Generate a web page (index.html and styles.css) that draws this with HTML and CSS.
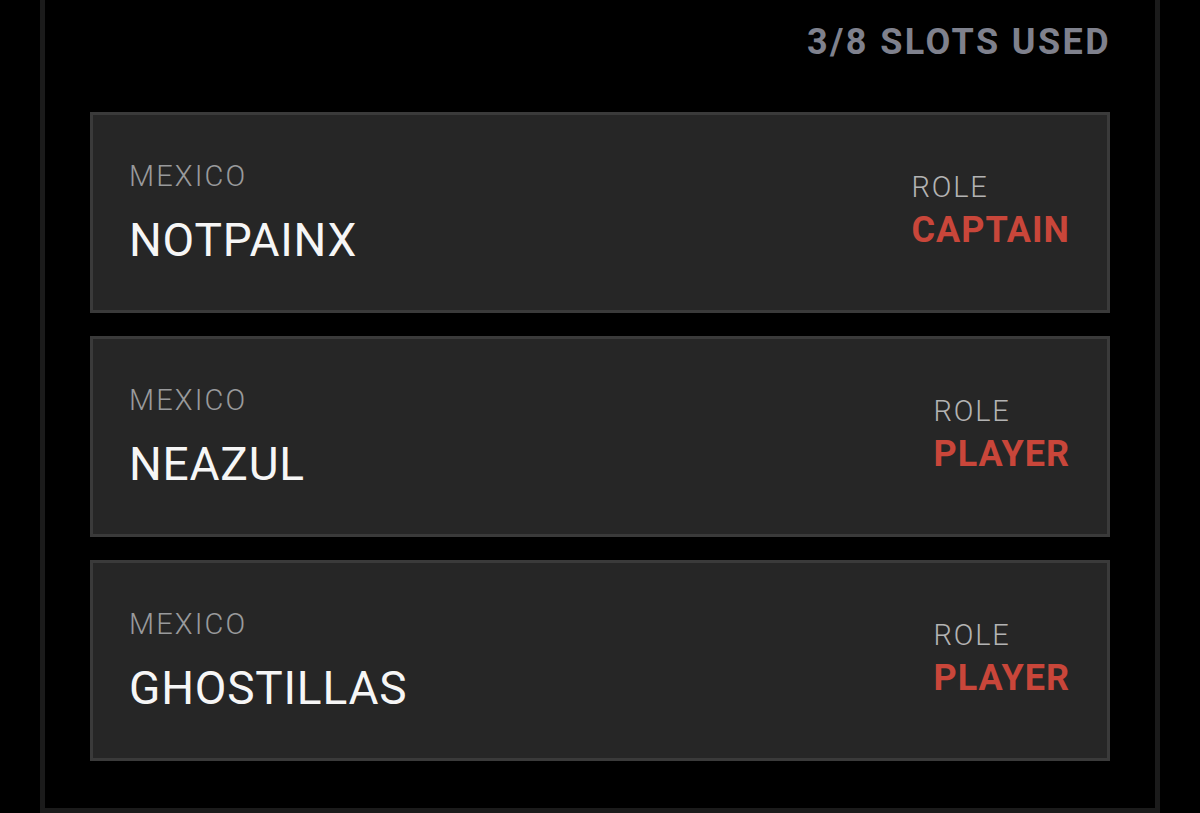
FILE: index.html
```html
<!DOCTYPE html>
<html>
<head>
<meta charset="utf-8">
<link rel="stylesheet" href="styles.css">
</head>
<body>
<div class="panel">
  <div class="header">3/8 SLOTS USED</div>
  <div class="list">
    <div class="card">
      <div class="player">
        <div class="country">MEXICO</div>
        <div class="name">NOTPAINX</div>
      </div>
      <div class="role">
        <div class="role-label">ROLE</div>
        <div class="role-value">CAPTAIN</div>
      </div>
    </div>
    <div class="card">
      <div class="player">
        <div class="country">MEXICO</div>
        <div class="name">NEAZUL</div>
      </div>
      <div class="role">
        <div class="role-label">ROLE</div>
        <div class="role-value">PLAYER</div>
      </div>
    </div>
    <div class="card">
      <div class="player">
        <div class="country">MEXICO</div>
        <div class="name">GHOSTILLAS</div>
      </div>
      <div class="role">
        <div class="role-label">ROLE</div>
        <div class="role-value">PLAYER</div>
      </div>
    </div>
  </div>
</div>
</body>
</html>
```

FILE: styles.css
```css
html, body {
  margin: 0;
  padding: 0;
  background: #000;
  height: 813px;
  overflow: hidden;
}
body {
  font-family: Roboto, "Liberation Sans", sans-serif;
}
.panel {
  box-sizing: border-box;
  width: 1120px;
  height: 813px;
  margin-left: 40px;
  border: 5px solid #1b1b1b;
  border-top: none;
  padding: 24px 45px 0 45px;
  display: flex;
  flex-direction: column;
}
.header {
  text-align: right;
  color: #7f818d;
  font-weight: 700;
  font-size: 36px;
  line-height: 36px;
  letter-spacing: 2.4px;
  margin-right: -1px;
  height: 88px;
}
.list {
  display: flex;
  flex-direction: column;
  gap: 23px;
}
.card {
  box-sizing: border-box;
  height: 201px;
  background: #262626;
  border: 3px solid #3a3a3a;
  display: flex;
  align-items: center;
  justify-content: space-between;
  padding: 0 37px 0 36px;
}
.player {
  display: flex;
  flex-direction: column;
  padding-top: 2px;
  padding-bottom: 4px;
}
.country {
  color: #999a9c;
  font-size: 29px;
  font-weight: 300;
  line-height: 30px;
  letter-spacing: 2.1px;
  margin-bottom: 26px;
}
.name {
  color: #f6f6f6;
  font-size: 46px;
  font-weight: 400;
  line-height: 46px;
  letter-spacing: 0.8px;
}
.role {
  display: flex;
  flex-direction: column;
  padding-bottom: 6px;
}
.role-label {
  color: #b3b3b3;
  font-size: 29px;
  font-weight: 300;
  line-height: 30px;
  letter-spacing: 1.8px;
  margin-bottom: 10px;
}
.role-value {
  color: #c9463a;
  font-size: 36px;
  font-weight: 700;
  line-height: 36px;
  letter-spacing: 1px;
}
```
